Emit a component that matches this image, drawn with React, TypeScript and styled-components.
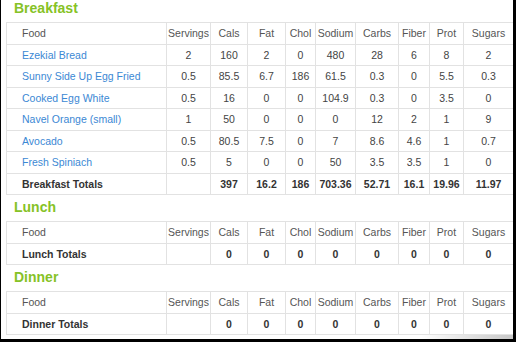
import React from "react";
import styled, { createGlobalStyle } from "styled-components";

const GlobalStyle = createGlobalStyle`
  html, body { margin: 0; padding: 0; background: #fff; }
  body { font-family: "Liberation Sans", Arial, sans-serif; }
`;

const Frame = styled.div`
  width: 516px;
  height: 342px;
  box-sizing: border-box;
  border-left: 1px solid #000;
  border-right: 3px solid #000;
  border-bottom: 3px solid #000;
  padding-left: 5px;
  background: #fff;
  display: flex;
  flex-direction: column;
  overflow: hidden;
`;

const Section = styled.section<{ $first?: boolean }>`
  margin-top: ${(p) => (p.$first ? "0" : "4px")};
`;

const Heading = styled.h2`
  margin: 0;
  height: 22px;
  box-sizing: border-box;
  padding: 0 0 0 8px;
  font-size: 14px;
  line-height: 17px;
  font-weight: bold;
  color: #86c226;
`;

const Table = styled.table`
  width: 507px;
  border-collapse: collapse;
  table-layout: fixed;
  font-size: 10.5px;
`;

const Row = styled.tr`
  height: 21.5px;
`;

const Cell = styled.td<{ $food?: boolean; $kind?: "head" | "body" | "total" }>`
  border: 1px solid #e2e2e2;
  padding: 0 ${(p) => (p.$food ? "0 0 15px" : "0")};
  padding-left: ${(p) => (p.$food ? "15px" : "0")};
  text-align: ${(p) => (p.$food ? "left" : "center")};
  vertical-align: middle;
  white-space: nowrap;
  overflow: hidden;
  font-weight: ${(p) => (p.$kind === "total" ? "bold" : "normal")};
  color: ${(p) =>
    p.$kind === "total" ? "#333" : p.$kind === "head" ? "#555" : "#444"};
`;

const FoodLink = styled.a`
  color: #3b88d4;
  text-decoration: none;
`;

const Shadow = styled.div`
  margin-top: auto;
  margin-left: -5px;
  height: 5px;
  background: linear-gradient(to right, rgba(0, 0, 0, 0) 82%, rgba(0, 0, 0, 0.22));
`;

const widths = [160, 44, 37, 38, 30, 40, 43, 31, 34, 50];
const columns = ["Servings", "Cals", "Fat", "Chol", "Sodium", "Carbs", "Fiber", "Prot", "Sugars"];

type Meal = {
  name: string;
  items: { food: string; values: string[] }[];
  totals: string[];
};

const meals: Meal[] = [
  {
    name: "Breakfast",
    items: [
      { food: "Ezekial Bread", values: ["2", "160", "2", "0", "480", "28", "6", "8", "2"] },
      { food: "Sunny Side Up Egg Fried", values: ["0.5", "85.5", "6.7", "186", "61.5", "0.3", "0", "5.5", "0.3"] },
      { food: "Cooked Egg White", values: ["0.5", "16", "0", "0", "104.9", "0.3", "0", "3.5", "0"] },
      { food: "Navel Orange (small)", values: ["1", "50", "0", "0", "0", "12", "2", "1", "9"] },
      { food: "Avocado", values: ["0.5", "80.5", "7.5", "0", "7", "8.6", "4.6", "1", "0.7"] },
      { food: "Fresh Spiniach", values: ["0.5", "5", "0", "0", "50", "3.5", "3.5", "1", "0"] },
    ],
    totals: ["", "397", "16.2", "186", "703.36", "52.71", "16.1", "19.96", "11.97"],
  },
  { name: "Lunch", items: [], totals: ["", "0", "0", "0", "0", "0", "0", "0", "0"] },
  { name: "Dinner", items: [], totals: ["", "0", "0", "0", "0", "0", "0", "0", "0"] },
];

function MealTable({ meal, first }: { meal: Meal; first: boolean }) {
  return (
    <Section $first={first}>
      <Heading>{meal.name}</Heading>
      <Table>
        <colgroup>
          {widths.map((w, i) => (
            <col key={i} style={{ width: w }} />
          ))}
        </colgroup>
        <tbody>
          <Row>
            <Cell $food $kind="head">Food</Cell>
            {columns.map((c) => (
              <Cell key={c} $kind="head">{c}</Cell>
            ))}
          </Row>
          {meal.items.map((it) => (
            <Row key={it.food}>
              <Cell $food $kind="body">
                <FoodLink href="#">{it.food}</FoodLink>
              </Cell>
              {it.values.map((v, i) => (
                <Cell key={i} $kind="body">{v}</Cell>
              ))}
            </Row>
          ))}
          <Row>
            <Cell $food $kind="total">{meal.name} Totals</Cell>
            {meal.totals.map((v, i) => (
              <Cell key={i} $kind="total">{v}</Cell>
            ))}
          </Row>
        </tbody>
      </Table>
    </Section>
  );
}

export default function App() {
  return (
    <>
      <GlobalStyle />
      <Frame>
        {meals.map((m, i) => (
          <MealTable key={m.name} meal={m} first={i === 0} />
        ))}
        <Shadow />
      </Frame>
    </>
  );
}
